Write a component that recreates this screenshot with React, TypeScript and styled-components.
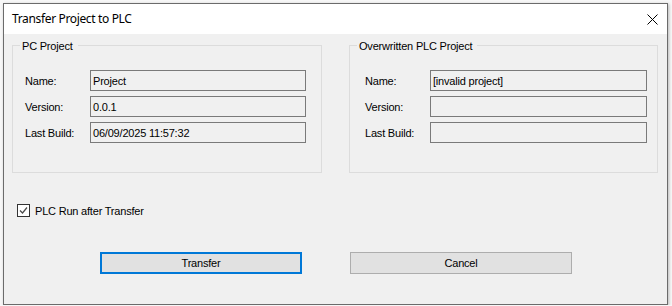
import React from "react";
import styled, { createGlobalStyle } from "styled-components";

const GlobalStyle = createGlobalStyle`
  html, body { margin: 0; padding: 0; background: #f7f7f7; }
  body { font-family: "Liberation Sans", Arial, sans-serif; }
`;

const Window = styled.div`
  box-sizing: border-box;
  margin: 3px 0 0 3px;
  width: 665px;
  height: 302px;
  border: 1px solid #6b6b6b;
  box-shadow: 1px 1px 3px rgba(0, 0, 0, 0.25);
  display: flex;
  flex-direction: column;
  background: #f0f0f0;
`;

const TitleBar = styled.div`
  height: 30px;
  flex: 0 0 30px;
  background: #ffffff;
  display: flex;
  align-items: center;
  justify-content: space-between;
  padding: 0 9px 0 8px;
`;

const Title = styled.span`
  font-family: "Noto Sans", "Open Sans", sans-serif;
  font-size: 12px;
  letter-spacing: -0.35px;
  color: #000;
  line-height: 16px;
`;

const CloseBtn = styled.span`
  display: flex;
  width: 11px;
  height: 11px;
  margin-top: 1px;
`;

const Body = styled.div`
  flex: 1;
  display: flex;
  flex-direction: column;
  padding: 11px 9px 0 8px;
  font-size: 11px;
  letter-spacing: -0.2px;
  color: #000;
`;

const GroupsRow = styled.div`
  display: flex;
  gap: 27px;
`;

const GroupBox = styled.div<{ $w: number; $padL: number }>`
  position: relative;
  box-sizing: border-box;
  width: ${(p) => p.$w}px;
  height: 128px;
  border: 1px solid #dcdcdc;
  padding: 24px 0 0 ${(p) => p.$padL}px;
  display: flex;
  flex-direction: column;
  gap: 5px;
`;

const Legend = styled.span`
  position: absolute;
  top: -7px;
  left: 7px;
  padding: 0 5px 0 2px;
  background: #f0f0f0;
  line-height: 14px;
`;

const FieldRow = styled.div`
  display: flex;
  align-items: center;
  height: 21px;
`;

const Label = styled.span<{ $w: number }>`
  width: ${(p) => p.$w}px;
  flex: 0 0 auto;
`;

const Field = styled.div<{ $w: number }>`
  box-sizing: border-box;
  width: ${(p) => p.$w}px;
  height: 21px;
  border: 1px solid #7a7a7a;
  background: #f0f0f0;
  padding: 0 2px;
  display: flex;
  align-items: center;
  white-space: nowrap;
`;

const CheckRow = styled.label`
  display: flex;
  align-items: center;
  gap: 5px;
  height: 13px;
  margin: 31px 0 0 5px;
`;

const CheckBox = styled.span`
  box-sizing: border-box;
  width: 13px;
  height: 13px;
  border: 1px solid #333333;
  background: #ffffff;
  display: flex;
  align-items: center;
  justify-content: center;
`;

const ButtonRow = styled.div`
  display: flex;
  gap: 48px;
  margin: 35px 0 0 88px;
`;

const Button = styled.button<{ $w: number; $focused?: boolean }>`
  box-sizing: border-box;
  width: ${(p) => p.$w}px;
  height: 22px;
  background: #e1e1e1;
  border: ${(p) => (p.$focused ? "2px solid #0078d7" : "1px solid #adadad")};
  font-family: "Liberation Sans", Arial, sans-serif;
  font-size: 11px;
  letter-spacing: -0.2px;
  color: #000;
  padding: 0;
  margin: 0;
`;

type FieldDef = { label: string; value: string };

const Group: React.FC<{
  title: string;
  width: number;
  padL: number;
  labelW: number;
  fieldW: number;
  fields: FieldDef[];
}> = ({ title, width, padL, labelW, fieldW, fields }) => (
  <GroupBox $w={width} $padL={padL}>
    <Legend>{title}</Legend>
    {fields.map((f) => (
      <FieldRow key={f.label}>
        <Label $w={labelW}>{f.label}</Label>
        <Field $w={fieldW}>{f.value}</Field>
      </FieldRow>
    ))}
  </GroupBox>
);

export default function App() {
  return (
    <>
      <GlobalStyle />
      <Window>
        <TitleBar>
          <Title>Transfer Project to PLC</Title>
          <CloseBtn>
            <svg width="11" height="11" viewBox="0 0 11 11">
              <path d="M0.5 0.5 L10.5 10.5 M10.5 0.5 L0.5 10.5" stroke="#000" strokeWidth="1" fill="none" />
            </svg>
          </CloseBtn>
        </TitleBar>
        <Body>
          <GroupsRow>
            <Group
              title="PC Project"
              width={310}
              padL={12}
              labelW={65}
              fieldW={216}
              fields={[
                { label: "Name:", value: "Project" },
                { label: "Version:", value: "0.0.1" },
                { label: "Last Build:", value: "06/09/2025 11:57:32" },
              ]}
            />
            <Group
              title="Overwritten PLC Project"
              width={309}
              padL={15}
              labelW={65}
              fieldW={217}
              fields={[
                { label: "Name:", value: "[invalid project]" },
                { label: "Version:", value: "" },
                { label: "Last Build:", value: "" },
              ]}
            />
          </GroupsRow>
          <CheckRow>
            <CheckBox>
              <svg width="11" height="11" viewBox="0 0 11 11">
                <path d="M2 5.5 L4.5 8 L9 2.5" stroke="#4a4a4a" strokeWidth="1.2" fill="none" />
              </svg>
            </CheckBox>
            <span>PLC Run after Transfer</span>
          </CheckRow>
          <ButtonRow>
            <Button $w={202} $focused>Transfer</Button>
            <Button $w={222}>Cancel</Button>
          </ButtonRow>
        </Body>
      </Window>
    </>
  );
}
